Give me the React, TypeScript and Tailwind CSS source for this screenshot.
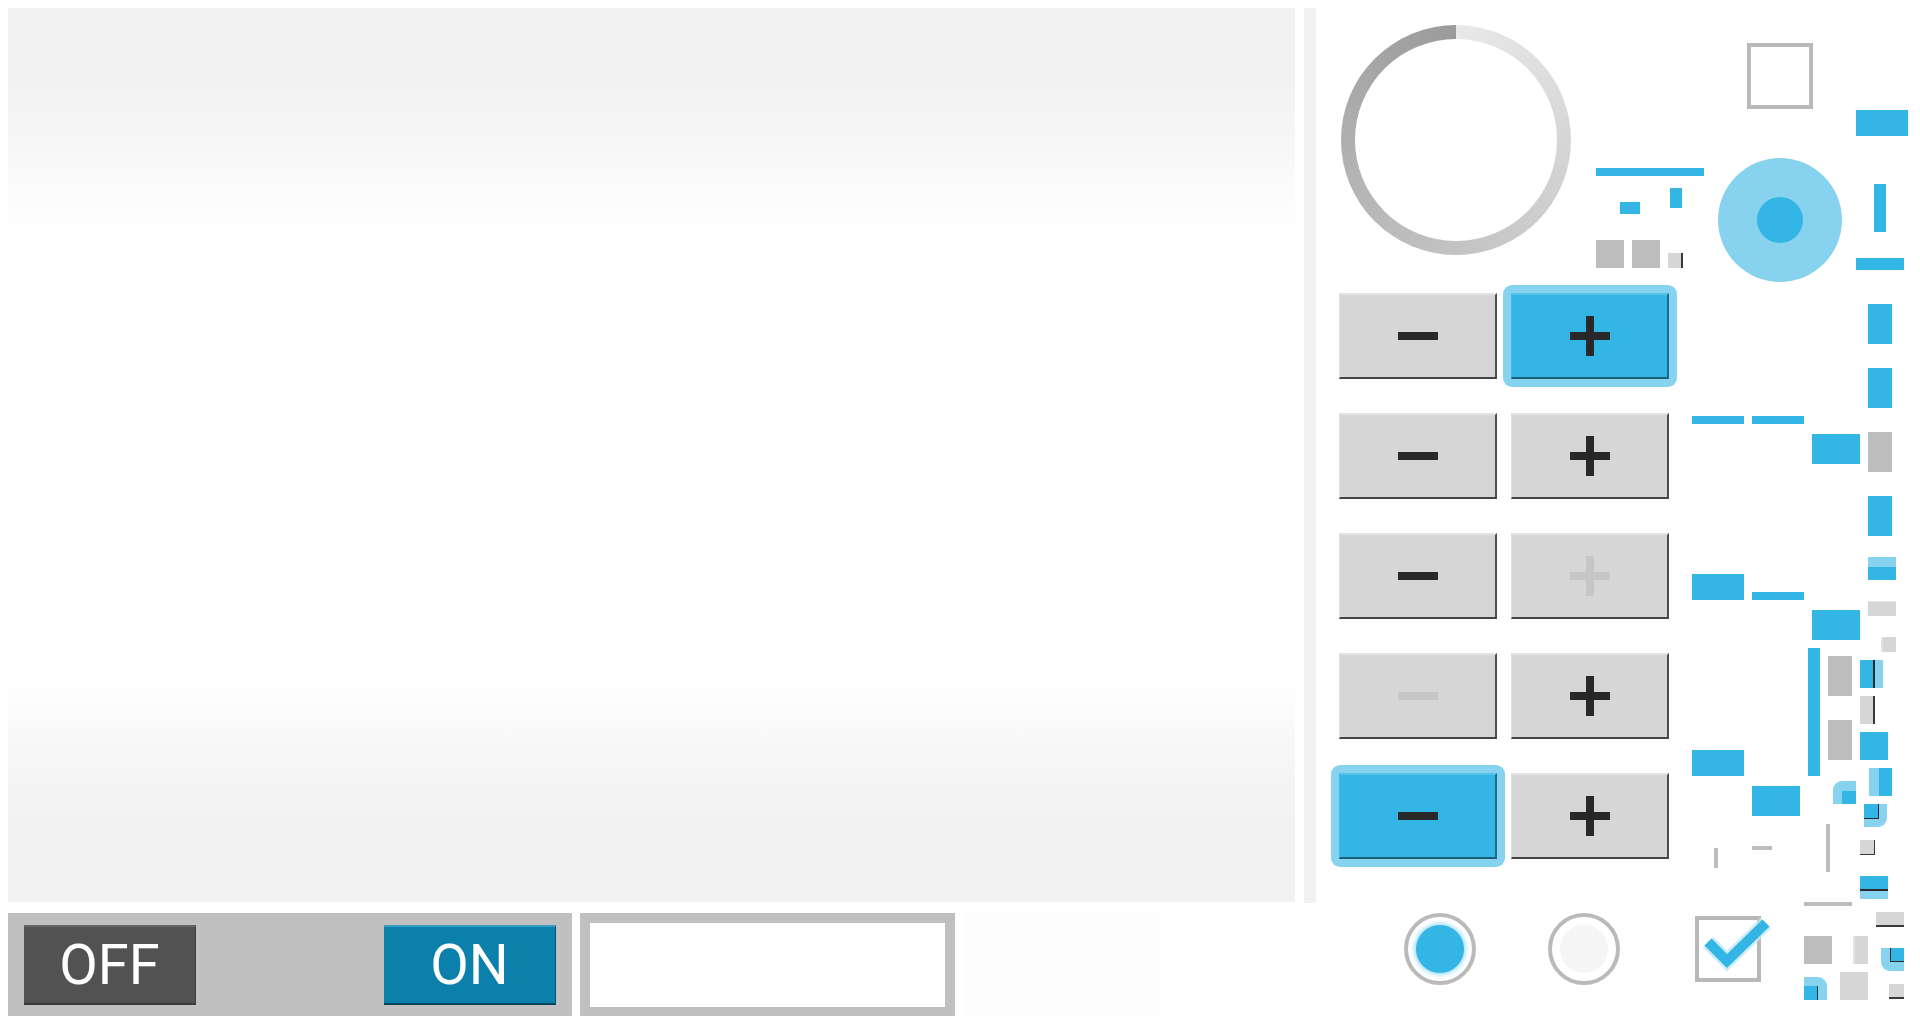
import React from "react";

type Item = { c: string; child?: string };

const atlas: Item[] = [
  { c: "left-[1596px] top-[168px] w-[108px] h-[8px] bg-[#33b5e5]" },
  { c: "left-[1620px] top-[202px] w-[20px] h-[12px] bg-[#33b5e5]" },
  { c: "left-[1670px] top-[188px] w-[12px] h-[20px] bg-[#33b5e5]" },
  { c: "left-[1596px] top-[240px] w-[28px] h-[28px] bg-[#bdbdbd]" },
  { c: "left-[1632px] top-[240px] w-[28px] h-[28px] bg-[#bdbdbd]" },
  { c: "left-[1668px] top-[253px] w-[15px] h-[15px] bg-[#d6d6d6] border-r-2 border-r-[#3a3a3a]" },
  { c: "left-[1856px] top-[110px] w-[52px] h-[26px] bg-[#33b5e5]" },
  { c: "left-[1874px] top-[184px] w-[12px] h-[48px] bg-[#33b5e5]" },
  { c: "left-[1856px] top-[258px] w-[48px] h-[12px] bg-[#33b5e5]" },
  { c: "left-[1868px] top-[304px] w-[24px] h-[40px] bg-[#33b5e5]" },
  { c: "left-[1868px] top-[368px] w-[24px] h-[40px] bg-[#33b5e5]" },
  { c: "left-[1868px] top-[432px] w-[24px] h-[40px] bg-[#bdbdbd]" },
  { c: "left-[1868px] top-[496px] w-[24px] h-[40px] bg-[#33b5e5]" },
  { c: "left-[1692px] top-[416px] w-[52px] h-[8px] bg-[#33b5e5]" },
  { c: "left-[1752px] top-[416px] w-[52px] h-[8px] bg-[#33b5e5]" },
  { c: "left-[1812px] top-[434px] w-[48px] h-[30px] bg-[#33b5e5]" },
  { c: "left-[1692px] top-[574px] w-[52px] h-[26px] bg-[#33b5e5]" },
  { c: "left-[1752px] top-[592px] w-[52px] h-[8px] bg-[#33b5e5]" },
  { c: "left-[1812px] top-[610px] w-[48px] h-[30px] bg-[#33b5e5]" },
  { c: "left-[1868px] top-[557px] w-[28px] h-[23px] bg-[#33b5e5] border-t-[10px] border-t-[#87d3ef]" },
  { c: "left-[1868px] top-[601px] w-[28px] h-[15px] bg-[#d6d6d6] border-t border-t-[#e6e6e6]" },
  { c: "left-[1881px] top-[637px] w-[15px] h-[15px] bg-[#d6d6d6] border-l-2 border-l-[#e4e4e4]" },
  { c: "left-[1808px] top-[648px] w-[12px] h-[128px] bg-[#33b5e5]" },
  { c: "left-[1828px] top-[656px] w-[24px] h-[40px] bg-[#bdbdbd]" },
  { c: "left-[1828px] top-[720px] w-[24px] h-[40px] bg-[#bdbdbd]" },
  { c: "left-[1860px] top-[660px] w-[23px] h-[28px] bg-[#87d3ef]", child: "absolute left-0 top-0 w-[15px] h-full bg-[#33b5e5] border-r-2 border-r-[#2a2a2a]" },
  { c: "left-[1860px] top-[696px] w-[15px] h-[28px] bg-[#d6d6d6] border-r-2 border-r-[#3a3a3a]" },
  { c: "left-[1860px] top-[732px] w-[28px] h-[28px] bg-[#33b5e5]" },
  { c: "left-[1869px] top-[768px] w-[23px] h-[28px] bg-[#33b5e5] border-l-[10px] border-l-[#87d3ef]" },
  { c: "left-[1692px] top-[750px] w-[52px] h-[26px] bg-[#33b5e5]" },
  { c: "left-[1752px] top-[786px] w-[48px] h-[30px] bg-[#33b5e5]" },
  { c: "left-[1833px] top-[781px] w-[23px] h-[23px] bg-[#87d3ef] rounded-tl-[9px]", child: "absolute right-0 bottom-0 w-[14px] h-[13px] bg-[#33b5e5]" },
  { c: "left-[1864px] top-[804px] w-[23px] h-[23px] bg-[#87d3ef] rounded-br-[9px]", child: "absolute left-0 top-0 w-[15px] h-[15px] bg-[#33b5e5] border-r border-b border-[#2a2a2a]" },
  { c: "left-[1714px] top-[848px] w-[4px] h-[20px] bg-[#bdbdbd]" },
  { c: "left-[1752px] top-[846px] w-[20px] h-[4px] bg-[#bdbdbd]" },
  { c: "left-[1826px] top-[824px] w-[4px] h-[48px] bg-[#bdbdbd]" },
  { c: "left-[1860px] top-[840px] w-[15px] h-[15px] bg-[#d6d6d6] border-r border-b border-[#3a3a3a]" },
  { c: "left-[1860px] top-[876px] w-[28px] h-[23px] bg-[#87d3ef]", child: "absolute left-0 top-0 w-full h-[15px] bg-[#33b5e5] border-b-2 border-b-[#2a2a2a]" },
  { c: "left-[1804px] top-[902px] w-[48px] h-[4px] bg-[#bdbdbd]" },
  { c: "left-[1876px] top-[912px] w-[28px] h-[15px] bg-[#d6d6d6] border-b-2 border-b-[#3a3a3a]" },
  { c: "left-[1804px] top-[936px] w-[28px] h-[28px] bg-[#bdbdbd]" },
  { c: "left-[1853px] top-[936px] w-[15px] h-[28px] bg-[#d6d6d6] border-l-2 border-l-[#e4e4e4]" },
  { c: "left-[1881px] top-[948px] w-[23px] h-[23px] bg-[#87d3ef] rounded-bl-[9px]", child: "absolute right-0 top-0 w-[14px] h-[14px] bg-[#33b5e5] border-b border-l border-[#2a2a2a]" },
  { c: "left-[1804px] top-[977px] w-[23px] h-[23px] bg-[#87d3ef] rounded-tr-[9px]", child: "absolute left-0 bottom-0 w-[14px] h-[14px] bg-[#33b5e5] border-r border-r-[#2a2a2a]" },
  { c: "left-[1840px] top-[972px] w-[28px] h-[28px] bg-[#d6d6d6]" },
  { c: "left-[1889px] top-[984px] w-[15px] h-[15px] bg-[#d6d6d6] border-b-2 border-b-[#3a3a3a]" },
];

function Icon({ kind, disabled }: { kind: "minus" | "plus"; disabled?: boolean }) {
  const col = disabled ? "bg-[#c6c6c6]" : "bg-[#282828]";
  if (kind === "minus") return <div className={`w-[40px] h-[8px] ${col}`} />;
  return (
    <div className="relative w-[40px] h-[40px]">
      <div className={`absolute left-0 top-[16px] w-[40px] h-[8px] ${col}`} />
      <div className={`absolute left-[16px] top-0 w-[8px] h-[40px] ${col}`} />
    </div>
  );
}

function Btn({ kind, focused, disabled }: { kind: "minus" | "plus"; focused?: boolean; disabled?: boolean }) {
  if (focused) {
    return (
      <div className="-m-[8px] p-[8px] rounded-[9px] bg-[#87d3ef]">
        <div className="flex items-center justify-center w-[158px] h-[86px] bg-[#33b5e5] border-t-2 border-t-[#55c2ea] border-l border-l-[#45bce8] border-r-2 border-r-[#1f6c88] border-b-2 border-b-[#1a5f78]">
          <Icon kind={kind} />
        </div>
      </div>
    );
  }
  return (
    <div className="flex items-center justify-center w-[158px] h-[86px] bg-[#d6d6d6] border-t-2 border-t-[#e3e3e3] border-l border-l-[#e0e0e0] border-r-2 border-r-[#4d4d4d] border-b-2 border-b-[#444444]">
      <Icon kind={kind} disabled={disabled} />
    </div>
  );
}

export default function App() {
  return (
    <div className="relative w-[1920px] h-[1024px] bg-white overflow-hidden font-['Roboto',sans-serif]">
      {/* top row */}
      <div className="flex items-start pt-[8px] pl-[8px]">
        <div className="w-[1287px] h-[894px] bg-[linear-gradient(to_bottom,#f2f2f2_0%,#f2f2f2_8%,#f5f5f5_13%,#fbfbfb_20%,#ffffff_26%,#ffffff_75%,#f8f8f8_82%,#f4f4f4_87%,#f2f2f2_92%,#f2f2f2_100%)]" />
        <div className="ml-[9px] w-[12px] h-[895px] bg-[#f2f2f2]" />
        <div className="ml-[25px] flex flex-col">
          <div className="relative mt-[17px] w-[230px] h-[230px] rounded-full bg-[conic-gradient(#e9e9e9,#c3c3c3,#9b9b9b)]">
            <div className="absolute inset-[14px] rounded-full bg-white" />
          </div>
          <div className="mt-[38px] -ml-[2px] grid grid-cols-[158px_158px] auto-rows-[86px] gap-x-[14px] gap-y-[34px]">
            <Btn kind="minus" />
            <Btn kind="plus" focused />
            <Btn kind="minus" />
            <Btn kind="plus" />
            <Btn kind="minus" />
            <Btn kind="plus" disabled />
            <Btn kind="minus" disabled />
            <Btn kind="plus" />
            <Btn kind="minus" focused />
            <Btn kind="plus" />
          </div>
        </div>
      </div>

      {/* bottom row */}
      <div className="flex items-start pl-[8px] mt-[10px]">
        <div className="w-[564px] h-[103px] bg-[#c0c0c0] flex items-start justify-between px-[16px] pt-[12px]">
          <div className="w-[172px] h-[80px] flex items-center justify-center bg-[#525252] border-t-2 border-t-[#676767] border-b-2 border-b-[#3a3a3a] border-r border-r-[#3f3f3f]">
            <span className="text-white text-[56px] leading-none font-['Roboto',sans-serif]">OFF</span>
          </div>
          <div className="w-[172px] h-[80px] flex items-center justify-center bg-[#0a80aa] border-t-2 border-t-[#3a9dc2] border-b-2 border-b-[#05475f] border-r border-r-[#06506b]">
            <span className="text-white text-[56px] leading-none font-['Roboto',sans-serif]">ON</span>
          </div>
        </div>
        <div className="ml-[8px] w-[375px] h-[103px] bg-[#c0c0c0] pt-[10px] px-[10px]">
          <div className="w-full h-[84px] bg-white" />
        </div>
        <div className="ml-[10px] w-[195px] h-[103px] bg-[#fdfdfd]" />
        <div className="ml-[10px] w-[193px] h-[103px] bg-[#fefefe]" />
        <div className="ml-[41px] w-[72px] h-[72px] rounded-full border-4 border-[#bababa] bg-white flex items-center justify-center">
          <div className="w-[48px] h-[48px] rounded-full bg-[#33b5e5] shadow-[0_0_4px_2px_#a6e0f5]" />
        </div>
        <div className="ml-[72px] w-[72px] h-[72px] rounded-full border-4 border-[#bababa] bg-white flex items-center justify-center">
          <div className="w-[48px] h-[48px] rounded-full bg-[#f5f5f5]" />
        </div>
        <div className="ml-[75px] mt-[3px] relative w-[66px] h-[66px] border-4 border-[#b8b8b8]">
          <svg className="absolute -left-[4px] -top-[4px] overflow-visible" width="80" height="66" viewBox="0 0 80 66">
            <polyline points="13,26 32,45 71,7" fill="none" stroke="#bfe8f7" strokeWidth="15" strokeLinejoin="miter" opacity="0.8" />
            <polyline points="13,26 32,45 71,7" fill="none" stroke="#33b5e5" strokeWidth="10" strokeLinejoin="miter" />
          </svg>
        </div>
      </div>

      {/* texture atlas scatter */}
      <div className="absolute left-[1747px] top-[43px] w-[66px] h-[66px] border-4 border-[#b9b9b9]" />
      <div className="absolute left-[1718px] top-[158px] w-[124px] h-[124px] rounded-full bg-[#87d3ef] flex items-center justify-center">
        <div className="w-[46px] h-[46px] rounded-full bg-[#33b5e5]" />
      </div>
      {atlas.map((it, i) => (
        <div key={i} className={`absolute ${it.c}`}>
          {it.child ? <div className={it.child} /> : null}
        </div>
      ))}
    </div>
  );
}
